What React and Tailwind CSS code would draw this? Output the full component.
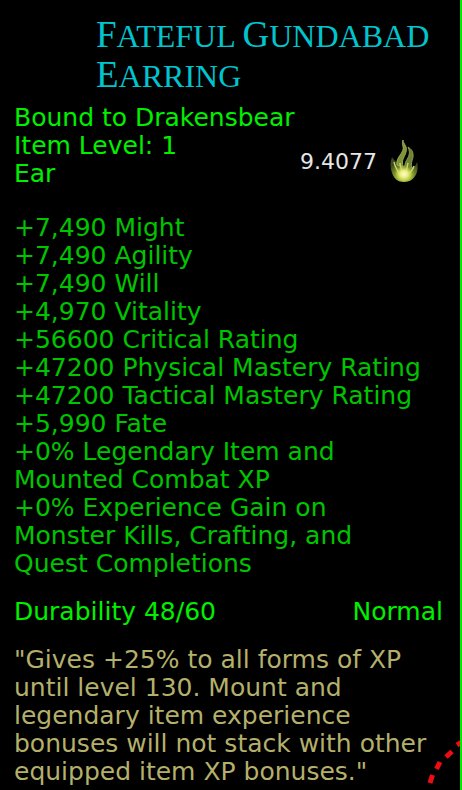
const stats = [
  "+7,490 Might",
  "+7,490 Agility",
  "+7,490 Will",
  "+4,970 Vitality",
  "+56600 Critical Rating",
  "+47200 Physical Mastery Rating",
  "+47200 Tactical Mastery Rating",
  "+5,990 Fate",
  "+0% Legendary Item and Mounted Combat XP",
  "+0% Experience Gain on Monster Kills, Crafting, and Quest Completions",
];

function SmallCaps({ text }) {
  return (
    <span className="uppercase">
      <span className="text-[37px] leading-none">{text[0]}</span>
      {text.slice(1)}
    </span>
  );
}

function Flame() {
  return (
    <svg viewBox="0 0 30 46" className="h-[46px] w-[30px]" aria-hidden="true">
      <defs>
        <radialGradient id="body" cx="50%" cy="76%" r="60%">
          <stop offset="0" stopColor="#dbe56a" />
          <stop offset="0.4" stopColor="#a3b83a" />
          <stop offset="0.75" stopColor="#61752a" />
          <stop offset="1" stopColor="#3c4a20" />
        </radialGradient>
        <radialGradient id="core" cx="50%" cy="50%" r="50%">
          <stop offset="0" stopColor="#fdfdc4" />
          <stop offset="0.4" stopColor="#eef08a" />
          <stop offset="1" stopColor="#c8da48" stopOpacity="0" />
        </radialGradient>
        <filter id="soft" x="-20%" y="-20%" width="140%" height="140%">
          <feGaussianBlur stdDeviation="0.7" />
        </filter>
      </defs>
      <g filter="url(#soft)">
        <path
          d="M3 20C1 25 1 31 3 36C5 42 9 45 15 45C22 45 26 41 28 35C29 31 29 28 28 25C27 28 26 30 23 30C21 27 17 27 14 29C10 26 6 25 3 20Z"
          fill="url(#body)"
        />
        <path d="M8 28C7 22 11 19 13 15C16 10 12 8 14 3C14 7 19 9 17 15C16 20 12 22 14 30Z" fill="#7d9339" stroke="#a9bb58" strokeWidth="0.8" />
        <path d="M16 31C15 25 19 22 20 18C21 15 20 13 19 10C22 12 24 14 24 17C25 22 21 25 23 31Z" fill="#6d8234" stroke="#94a74c" strokeWidth="0.8" />
        <path d="M5 25C6 31 9 33 10 37M11 26C11 30 13 32 13 36M19 26C18 30 18 32 17 35M25 29C24 33 22 34 20 37" fill="none" stroke="#c9d85c" strokeWidth="1.4" />
        <ellipse cx="15" cy="37" rx="9" ry="8" fill="url(#core)" />
      </g>
    </svg>
  );
}

export default function App() {
  return (
    <main className="relative min-h-screen overflow-hidden border-r-2 border-[#00ec00] bg-black pt-4 pr-[17px] pb-1 pl-[14px] font-['DejaVu_Sans',Verdana,sans-serif] text-[25px] leading-[28px] text-[#00f000]">
      <h1 className="-mr-3 pl-[82px] font-['Liberation_Serif',serif] text-[32px] leading-[40px] text-[#00c4ce]">
        <SmallCaps text="Fateful" /> <SmallCaps text="Gundabad" />{" "}
        <SmallCaps text="Earring" />
      </h1>

      <section className="mt-2 grid grid-cols-[1fr_auto]">
        <p className="col-span-2">Bound to Drakensbear</p>
        <div>
          <p>Item Level: 1</p>
          <p>Ear</p>
        </div>
        <div className="mr-[24px] flex h-[56px] items-center gap-3 text-[22px] text-[#e6e6e6]">
          <span className="pt-1">9.4077</span>
          <Flame />
        </div>
      </section>

      <ul className="mt-[26px] pr-3 text-[#00c400]">
        {stats.map((stat) => (
          <li key={stat}>{stat}</li>
        ))}
      </ul>

      <div className="mt-5 flex justify-between">
        <span>Durability 48/60</span>
        <span>Normal</span>
      </div>

      <p className="-mr-2 mt-5 text-[#b4b06c]">
        "Gives +25% to all forms of XP until level 130. Mount and legendary item
        experience bonuses will not stack with other equipped item XP bonuses."
      </p>

      <svg
        viewBox="0 0 38 50"
        className="absolute -right-0.5 bottom-0 h-[50px] w-[38px]"
        aria-hidden="true"
      >
        <path
          d="M6 43L8.5 35M12.5 29L16 22M22 17L28 11.500M33 5L38 2"
          fill="none"
          stroke="#ee0c14"
          strokeWidth="5"
        />
      </svg>
    </main>
  );
}
